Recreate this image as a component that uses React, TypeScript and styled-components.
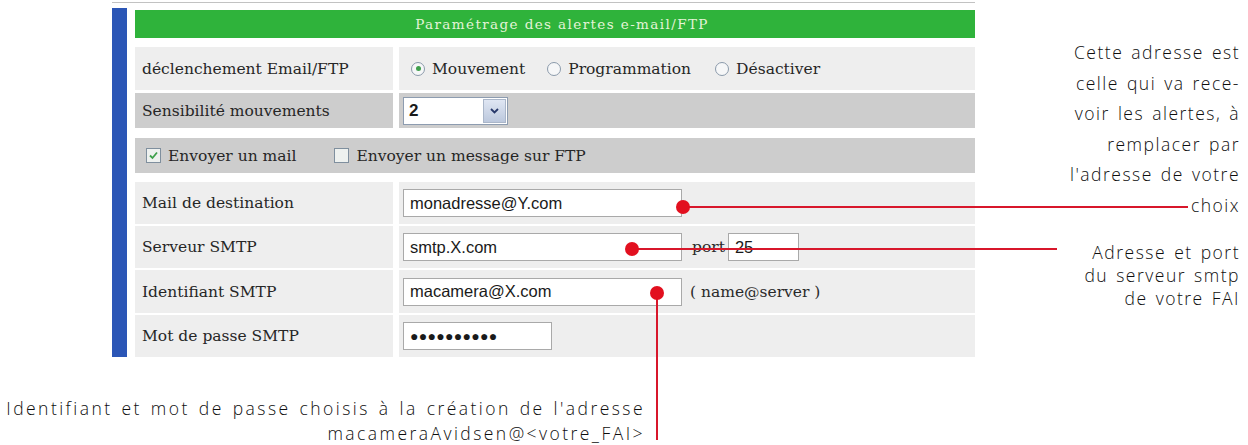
import React from 'react';
import styled, { createGlobalStyle } from 'styled-components';

const GlobalStyle = createGlobalStyle`
  html, body {
    margin: 0;
    padding: 0;
    background: #fff;
  }
  body {
    width: 1248px;
    height: 445px;
    overflow: hidden;
  }
`;

const SERIF = `"DejaVu Serif", "Liberation Serif", serif`;
const SANS = `"Liberation Sans", Arial, sans-serif`;
const NOTE = `"Open Sans", Lato, sans-serif`;
const RED = '#d8172b';

const Page = styled.div`
  position: relative;
  width: 1248px;
  height: 445px;
  display: grid;
  grid-template-columns: 975px 1fr;
  grid-template-rows: 360px 1fr;
`;

const Panel = styled.section`
  padding: 2px 0 0 112px;
`;

const TopRule = styled.div`
  height: 1px;
  background: #c2c2c2;
  margin-bottom: 5px;
`;

const Body = styled.div`
  display: flex;
  gap: 8px;
`;

const BlueBar = styled.div`
  width: 15px;
  background: #2b56b6;
`;

const Table = styled.div`
  flex: 1;
  margin-top: 2px;
  display: flex;
  flex-direction: column;
`;

const Header = styled.div`
  height: 28px;
  margin-bottom: 9px;
  background: #2fb33b;
  color: #e4f4d8;
  font-family: ${SERIF};
  font-size: 13.5px;
  letter-spacing: 1.4px;
  display: flex;
  align-items: center;
  justify-content: center;
  padding-left: 14px;
`;

const Row = styled.div<{ $h: number; $gap?: number }>`
  display: grid;
  grid-template-columns: 258px 1fr;
  column-gap: 6px;
  height: ${p => p.$h}px;
  margin-top: ${p => p.$gap ?? 2}px;
`;

const Cell = styled.div<{ $dark?: boolean; $wide?: boolean }>`
  background: ${p => (p.$dark ? '#cdcdcd' : '#eeeeee')};
  display: flex;
  align-items: center;
  font-family: ${SERIF};
  font-size: 15.5px;
  color: #262626;
  ${p => p.$wide && 'grid-column: 1 / -1;'}
`;

const Label = styled(Cell)`
  padding-left: 7px;
`;

const Value = styled(Cell)`
  padding-left: 4px;
  gap: 8px;
`;

const Choices = styled(Cell)<{ $pad: number }>`
  padding-left: ${p => p.$pad}px;
`;

const Option = styled.span<{ $space: number }>`
  display: inline-flex;
  align-items: center;
  gap: 7px;
  margin-right: ${p => p.$space}px;
`;

const Radio = styled.span<{ $on?: boolean }>`
  width: 12px;
  height: 12px;
  border-radius: 50%;
  border: 1px solid #8b9aab;
  background: #f6f7f8;
  display: inline-flex;
  align-items: center;
  justify-content: center;
  &::after {
    content: '';
    width: 5px;
    height: 5px;
    border-radius: 50%;
    background: ${p => (p.$on ? '#3f9f4c' : 'transparent')};
  }
`;

const Check = styled.span`
  width: 13px;
  height: 13px;
  border: 1px solid #7f8f9e;
  background: #eef1ef;
  display: inline-flex;
  align-items: center;
  justify-content: center;
`;

const TextBox = styled.span<{ $w: number }>`
  box-sizing: border-box;
  width: ${p => p.$w}px;
  height: 28px;
  border: 1px solid #a9a9a9;
  background: #fff;
  padding: 0 6px;
  display: inline-flex;
  align-items: center;
  font-family: ${SANS};
  font-size: 16.5px;
  color: #1a1a1a;
`;

const Dots = styled.span`
  font-size: 14px;
  letter-spacing: 0.3px;
  font-weight: bold;
`;

const Select = styled.span`
  box-sizing: border-box;
  width: 105px;
  height: 28px;
  border: 1px solid #8d9cb0;
  background: #fff;
  display: inline-flex;
  align-items: stretch;
  font-family: ${SANS};
  font-size: 17px;
  font-weight: bold;
  color: #1a1a1a;
`;

const SelectText = styled.span`
  flex: 1;
  display: flex;
  align-items: center;
  padding-left: 5px;
`;

const SelectButton = styled.span`
  width: 21px;
  margin: 1px;
  border: 1px solid #aab6c9;
  background: linear-gradient(#dfe6f3, #bcc8dd);
  display: flex;
  align-items: center;
  justify-content: center;
`;

const Hint = styled.span`
  font-family: ${SERIF};
  font-size: 15.5px;
  color: #2a2a2a;
`;

const PortGroup = styled.span`
  display: inline-flex;
  align-items: center;
  gap: 3px;
  margin-left: 2px;
`;

const Right = styled.aside`
  padding: 37px 8px 0 0;
  display: flex;
  flex-direction: column;
  align-items: flex-end;
`;

const Note = styled.p<{ $lh: number; $top?: number; $track?: number }>`
  margin: ${p => p.$top ?? 0}px 0 0;
  font-family: ${NOTE};
  font-weight: 300;
  font-size: 17.5px;
  letter-spacing: ${p => p.$track ?? 1.5}px;
  word-spacing: 2px;
  line-height: ${p => p.$lh}px;
  color: #0e0e0e;
  text-align: right;
  white-space: nowrap;
`;

const Bottom = styled.footer`
  grid-column: 1 / -1;
  width: 645px;
  padding-top: 36px;
  display: flex;
  justify-content: flex-end;
`;

const Dot = styled.span<{ $x: number; $y: number }>`
  position: absolute;
  left: ${p => p.$x - 7}px;
  top: ${p => p.$y - 7}px;
  width: 14px;
  height: 14px;
  border-radius: 50%;
  background: #e2101f;
`;

const Leader = styled.span<{ $x: number; $y: number; $len: number; $down?: boolean }>`
  position: absolute;
  left: ${p => (p.$down ? p.$x - 1 : p.$x)}px;
  top: ${p => (p.$down ? p.$y : p.$y - 1)}px;
  width: ${p => (p.$down ? 2 : p.$len)}px;
  height: ${p => (p.$down ? p.$len : 2)}px;
  background: ${RED};
`;

const Chevron = () => (
  <svg width="9" height="6" viewBox="0 0 9 6">
    <path d="M1 1 L4.5 4.5 L8 1" fill="none" stroke="#27386a" strokeWidth="1.8" />
  </svg>
);

const Tick = () => (
  <svg width="11" height="11" viewBox="0 0 11 11">
    <path d="M2 5.5 L4.5 8 L9 2.5" fill="none" stroke="#3ea04b" strokeWidth="1.8" />
  </svg>
);

export default function App() {
  return (
    <Page>
      <GlobalStyle />
      <Panel>
        <TopRule />
        <Body>
          <BlueBar />
          <Table>
            <Header>Paramétrage des alertes e-mail/FTP</Header>

            <Row $h={43} $gap={0}>
              <Label>déclenchement Email/FTP</Label>
              <Choices $pad={12}>
                <Option $space={22}><Radio $on />Mouvement</Option>
                <Option $space={24}><Radio />Programmation</Option>
                <Option $space={0}><Radio />Désactiver</Option>
              </Choices>
            </Row>

            <Row $h={35} $gap={3}>
              <Label $dark>Sensibilité mouvements</Label>
              <Value $dark>
                <Select>
                  <SelectText>2</SelectText>
                  <SelectButton><Chevron /></SelectButton>
                </Select>
              </Value>
            </Row>

            <Row $h={35} $gap={10}>
              <Choices $dark $wide $pad={11}>
                <Option $space={38}><Check><Tick /></Check>Envoyer un mail</Option>
                <Option $space={0}><Check />Envoyer un message sur FTP</Option>
              </Choices>
            </Row>

            <Row $h={42} $gap={9}>
              <Label>Mail de destination</Label>
              <Value><TextBox $w={279}>monadresse@Y.com</TextBox></Value>
            </Row>

            <Row $h={42}>
              <Label>Serveur SMTP</Label>
              <Value>
                <TextBox $w={279}>smtp.X.com</TextBox>
                <PortGroup>
                  <Hint>port</Hint>
                  <TextBox $w={71}>25</TextBox>
                </PortGroup>
              </Value>
            </Row>

            <Row $h={43}>
              <Label>Identifiant SMTP</Label>
              <Value>
                <TextBox $w={279}>macamera@X.com</TextBox>
                <Hint>( name@server )</Hint>
              </Value>
            </Row>

            <Row $h={42}>
              <Label>Mot de passe SMTP</Label>
              <Value>
                <TextBox $w={149}><Dots>●●●●●●●●●●</Dots></TextBox>
              </Value>
            </Row>
          </Table>
        </Body>
      </Panel>

      <Right>
        <Note $lh={30.6}>
          Cette adresse est<br />
          celle qui va rece-<br />
          voir les alertes, à<br />
          remplacer par<br />
          l'adresse de votre<br />
          choix
        </Note>
        <Note $lh={23} $top={20}>
          Adresse et port<br />
          du serveur smtp<br />
          de votre FAI
        </Note>
      </Right>

      <Bottom>
        <Note $lh={25} $track={2.45}>
          Identifiant et mot de passe choisis à la création de l'adresse<br />
          macameraAvidsen@&lt;votre_FAI&gt;
        </Note>
      </Bottom>

      <Leader $x={683} $y={207} $len={505} />
      <Dot $x={683} $y={207} />
      <Leader $x={632} $y={249} $len={425} />
      <Dot $x={632} $y={249} />
      <Leader $x={657} $y={293} $len={147} $down />
      <Dot $x={657} $y={293} />
    </Page>
  );
}
